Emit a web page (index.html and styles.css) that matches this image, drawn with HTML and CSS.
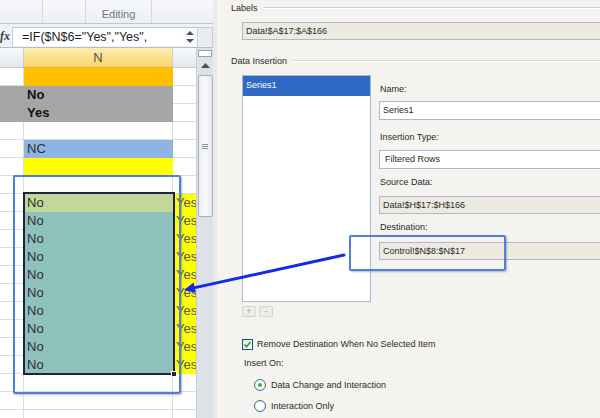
FILE: index.html
```html
<!DOCTYPE html>
<html lang="en">
<head>
    <meta charset="UTF-8">
    <meta name="viewport" content="width=device-width, initial-scale=1.0">
    <title>Data Insertion</title>
    <link rel="stylesheet" href="styles.css">
</head>
<body>

<div class="screen">
    <div class="excel">
        <div class="ribbon">
            <div class="group g1"></div>
            <div class="group g2"></div>
            <div class="group g3"><span>Editing</span></div>
            <div class="group g4"></div>
        </div>

        <div class="formula-bar">
            <div class="fx">fx</div>
            <div class="formula">=IF($N$6="Yes","Yes",</div>
            <div class="spin">
                <svg width="10" height="18" viewBox="0 0 10 18">
                    <polygon points="1,7 9,7 5,3" fill="#4a5260"/>
                    <polygon points="1,11 9,11 5,15" fill="#4a5260"/>
                </svg>
            </div>
            <div class="expand"></div>
        </div>

        <div class="sheet">
            <div class="grid">
                <div class="row head"><div class="c m"></div><div class="c n">N</div><div class="c o"></div></div>
                <div class="row"><div class="c m"></div><div class="c n orange"></div><div class="c o"></div></div>
                <div class="row"><div class="c m gray"></div><div class="c n gray bold">No</div><div class="c o"></div></div>
                <div class="row"><div class="c m gray"></div><div class="c n gray bold">Yes</div><div class="c o"></div></div>
                <div class="row"><div class="c m"></div><div class="c n"></div><div class="c o"></div></div>
                <div class="row"><div class="c m"></div><div class="c n blue">NC</div><div class="c o"></div></div>
                <div class="row"><div class="c m"></div><div class="c n yellow"></div><div class="c o"></div></div>
                <div class="row"><div class="c m"></div><div class="c n"></div><div class="c o"></div></div>
                <div class="row"><div class="c m"></div><div class="c n active">No</div><div class="c o yellow">Yes</div></div>
                <div class="row"><div class="c m"></div><div class="c n teal">No</div><div class="c o yellow">Yes</div></div>
                <div class="row"><div class="c m"></div><div class="c n teal">No</div><div class="c o yellow">Yes</div></div>
                <div class="row"><div class="c m"></div><div class="c n teal">No</div><div class="c o yellow">Yes</div></div>
                <div class="row"><div class="c m"></div><div class="c n teal">No</div><div class="c o yellow">Yes</div></div>
                <div class="row"><div class="c m"></div><div class="c n teal">No</div><div class="c o yellow">Yes</div></div>
                <div class="row"><div class="c m"></div><div class="c n teal">No</div><div class="c o yellow">Yes</div></div>
                <div class="row"><div class="c m"></div><div class="c n teal">No</div><div class="c o yellow">Yes</div></div>
                <div class="row"><div class="c m"></div><div class="c n teal">No</div><div class="c o yellow">Yes</div></div>
                <div class="row"><div class="c m"></div><div class="c n teal">No</div><div class="c o yellow">Yes</div></div>
                <div class="row"><div class="c m"></div><div class="c n"></div><div class="c o"></div></div>
                <div class="row"><div class="c m"></div><div class="c n"></div><div class="c o"></div></div>
                <div class="row"><div class="c m"></div><div class="c n"></div><div class="c o"></div></div>
            </div>

            <div class="vscroll">
                <div class="split"></div>
                <div class="up">
                    <svg width="9" height="5" viewBox="0 0 9 5"><polygon points="0,5 9,5 4.5,0" fill="#4a5260"/></svg>
                </div>
                <div class="thumb">
                    <div class="grip"></div>
                </div>
            </div>
        </div>
    </div>

    <div class="splitter"></div>

    <div class="dialog">
        <div class="legend">Labels</div>
        <div class="field ro wide">Data!$A$17:$A$166</div>

        <div class="legend second">Data Insertion</div>
        <div class="insertion">
            <div class="series">
                <div class="list">
                    <div class="item selected">Series1</div>
                </div>
                <div class="list-buttons">
                    <div class="mini">+</div>
                    <div class="mini">-</div>
                </div>
            </div>

            <div class="props">
                <div class="label">Name:</div>
                <div class="field tall name">Series1</div>
                <div class="label type">Insertion Type:</div>
                <div class="field tall combo">Filtered Rows</div>
                <div class="label src">Source Data:</div>
                <div class="field ro source">Data!$H$17:$H$166</div>
                <div class="label src">Destination:</div>
                <div class="field ro dest">Control!$N$8:$N$17</div>
            </div>
        </div>

        <div class="check-row">
            <span class="checkbox">
                <svg width="9" height="9" viewBox="0 0 9 9"><polyline points="1.5,4.5 3.5,6.8 7.5,2" fill="none" stroke="#24a82e" stroke-width="1.6"/></svg>
            </span>
            Remove Destination When No Selected Item
        </div>
        <div class="insert-on">Insert On:</div>
        <div class="radio-row first"><span class="radio on"></span>Data Change and Interaction</div>
        <div class="radio-row"><span class="radio"></span>Interaction Only</div>
    </div>

    <!-- selection marquee on the sheet -->
    <div class="selection"></div>
    <div class="fill-handle"></div>

    <!-- annotation callouts -->
    <div class="callout range"></div>
    <div class="callout destination"></div>
    <svg class="arrow" width="600" height="418" viewBox="0 0 600 418">
        <line x1="344" y1="255" x2="195" y2="287.6" stroke="#1428ee" stroke-width="3" stroke-linecap="round"/>
        <polygon points="184,290 195.8,292.8 193.6,282.4" fill="#1428ee"/>
    </svg>
</div>

</body>
</html>
```

FILE: styles.css
```css
* {
    box-sizing: border-box;
}
body {
    margin: 0;
    width: 600px;
    height: 418px;
    overflow: hidden;
    font-family: "Liberation Sans", Arial, sans-serif;
    background: #f4f3ef;
}
.screen {
    position: relative;
    display: flex;
    width: 600px;
    height: 418px;
    overflow: hidden;
}

/* spreadsheet side */
.excel {
    width: 213px;
    flex: none;
    display: flex;
    flex-direction: column;
    background: #fff;
}
.ribbon {
    height: 24px;
    display: flex;
    background: linear-gradient(#f7f8fa, #eceff3);
    border-bottom: 1px solid #bfc7d2;
}
.group {
    display: flex;
    align-items: flex-end;
    justify-content: center;
    border-right: 1px solid #d2d8e0;
}
.g1, .g2 {
    width: 43px;
}
.g3 {
    width: 66px;
}
.g4 {
    flex: 1;
    border-right: none;
}
.group span {
    font-size: 11px;
    color: #707886;
    padding-bottom: 3px;
}
.formula-bar {
    height: 24px;
    display: flex;
    padding: 3px 0 1px;
    background: #eef1f5;
    border-bottom: 1px solid #b3bcc8;
}
.fx {
    width: 13px;
    font: italic bold 12px "Liberation Serif", serif;
    color: #3d3d3d;
    line-height: 19px;
    text-align: right;
    padding-right: 2px;
    overflow: hidden;
    white-space: nowrap;
    border-right: 1px solid #c7ced8;
}
.formula {
    width: 170px;
    background: #fff;
    border-top: 1px solid #c0c8d3;
    padding-left: 9px;
    font-size: 12.5px;
    line-height: 18px;
    color: #1e1e1e;
    white-space: nowrap;
    overflow: hidden;
}
.spin {
    width: 14px;
    display: flex;
    align-items: center;
    justify-content: center;
    background: #fbfbfc;
    border-top: 1px solid #c0c8d3;
}
.expand {
    flex: 1;
    background: #e9ecf1;
    border: 1px solid #c7ced8;
    border-bottom: none;
}
.sheet {
    flex: 1;
    display: flex;
    overflow: hidden;
}
.grid {
    width: 196px;
    flex: none;
}
.row {
    display: flex;
    height: 18px;
}
.c {
    height: 100%;
    border-right: 1px solid #dadcdf;
    border-bottom: 1px solid #dadcdf;
    padding-left: 3px;
    font-size: 13px;
    line-height: 17px;
    color: #2e2e2e;
    white-space: nowrap;
    overflow: hidden;
}
.m {
    width: 24px;
}
.n {
    width: 149px;
}
.o {
    width: 23px;
    border-right: none;
    color: #575757;
}
.head {
    height: 20px;
}
.head .c {
    padding: 0;
    text-align: center;
    line-height: 19px;
    color: #4f4f4f;
    background: linear-gradient(#f8f9fb, #e3e7ed);
    border-color: #c6cdd7;
}
.head .n {
    background: linear-gradient(#fdedb2, #f9d46c);
    border-bottom-color: #e5b136;
}
.orange {
    background: #ffc000;
    border-color: #ffc000;
}
.gray {
    background: #a6a6a6;
    border-color: #a6a6a6;
}
.bold {
    font-weight: bold;
    color: #111;
}
.blue {
    background: #8db4e2;
    border-color: #8db4e2;
}
.yellow {
    background: #ffff00;
    border-color: #ffff00;
}
.active {
    background: #c4d79b;
    border-color: #c4d79b;
}
.teal {
    background: #8fc1bd;
    border-color: #8fc1bd;
}
.vscroll {
    width: 17px;
    flex: none;
    display: flex;
    flex-direction: column;
    align-items: center;
    background: #dde1e8;
    border-left: 1px solid #c9ced6;
}
.split {
    width: 14px;
    height: 7px;
    margin-top: 2px;
    background: #fff;
    border: 1px solid #98a2af;
}
.up {
    width: 15px;
    height: 17px;
    display: flex;
    align-items: center;
    justify-content: center;
}
.thumb {
    width: 15px;
    height: 142px;
    margin-top: 1px;
    display: flex;
    align-items: center;
    justify-content: center;
    background: linear-gradient(90deg, #eceff3, #f7f8fa, #e4e7ec);
    border: 1px solid #a9b1bd;
    border-radius: 2px;
}
.grip {
    width: 6px;
    height: 5px;
    border-top: 1px solid #8a93a0;
    border-bottom: 1px solid #8a93a0;
    background: linear-gradient(transparent 1px, #8a93a0 1px, #8a93a0 2px, transparent 2px);
}
.splitter {
    width: 4px;
    flex: none;
    background: #e8eaee;
}

/* dialog side */
.dialog {
    flex: 1;
    min-width: 0;
    padding: 2px 0 0 14px;
    font-size: 9px;
    color: #2a2a2a;
    overflow: hidden;
    white-space: nowrap;
}
.legend {
    display: flex;
    align-items: center;
    height: 12px;
}
.legend::after {
    content: "";
    flex: 1;
    margin-left: 5px;
    border-top: 1px solid #c6d1de;
    border-bottom: 1px solid #fff;
}
.legend.second {
    margin-top: 15px;
}
.legend.second::after {
    margin-left: 6px;
    border-top-color: #d6d9dd;
}
.field {
    height: 18px;
    width: 260px;
    padding-left: 3px;
    line-height: 16px;
    background: #fff;
    border: 1px solid #a7bad1;
}
.field.ro {
    background: #eeeae0;
}
.field.tall {
    height: 19px;
    line-height: 17px;
}
.wide {
    width: 400px;
    margin: 8px 0 0 11px;
}
.insertion {
    display: flex;
    gap: 8px;
    margin: 8px 0 0 11px;
}
.list {
    width: 129px;
    height: 227px;
    background: #fff;
    border: 1px solid #a7bad1;
}
.item {
    height: 20px;
    line-height: 19px;
    padding-left: 3px;
}
.item.selected {
    background: #316ac5;
    color: #fff;
}
.list-buttons {
    display: flex;
    gap: 3px;
    margin-top: 4px;
}
.mini {
    width: 14px;
    height: 11px;
    line-height: 9px;
    text-align: center;
    font-size: 9px;
    color: #a8a8a2;
    background: #eeede7;
    border: 1px solid #d6d5cd;
    border-radius: 1px;
}
.label {
    height: 12px;
    line-height: 12px;
    margin: 8px 0 0 1px;
}
.name {
    margin-top: 6px;
}
.label.type {
    margin-top: 11px;
}
.combo {
    margin-top: 7px;
    padding-left: 5px;
}
.label.src {
    margin-top: 7px;
}
.source {
    margin-top: 8px;
}
.dest {
    margin-top: 9px;
}
.check-row {
    display: flex;
    align-items: center;
    gap: 4px;
    height: 12px;
    margin: 21px 0 0 11px;
}
.checkbox {
    width: 11px;
    height: 11px;
    display: flex;
    align-items: center;
    justify-content: center;
    background: linear-gradient(135deg, #e6e6e0, #fff);
    border: 1px solid #1c5180;
}
.insert-on {
    height: 12px;
    line-height: 12px;
    margin: 7px 0 0 13px;
}
.radio-row {
    display: flex;
    align-items: center;
    gap: 5px;
    height: 12px;
    margin: 9px 0 0 23px;
}
.radio-row.first {
    margin-top: 10px;
}
.radio {
    width: 12px;
    height: 12px;
    border-radius: 50%;
    border: 1px solid #3d6d9e;
    background: radial-gradient(circle, #fff 40%, #e4e4de);
    display: flex;
    align-items: center;
    justify-content: center;
}
.radio.on::after {
    content: "";
    width: 4px;
    height: 4px;
    border-radius: 50%;
    background: #2dbb35;
}

/* overlays */
.selection {
    position: absolute;
    left: 23px;
    top: 192px;
    width: 152px;
    height: 183px;
    border: 2px solid #22203e;
}
.fill-handle {
    position: absolute;
    left: 171px;
    top: 371px;
    width: 6px;
    height: 6px;
    background: #22203e;
    border: 1px solid #fff;
}
.callout {
    position: absolute;
    border: 2.5px solid #4f7fd6;
    border-radius: 2px;
    box-shadow: 1px 1px 2px rgba(40, 60, 110, 0.35);
}
.callout.range {
    left: 13px;
    top: 175px;
    width: 168px;
    height: 219px;
}
.callout.destination {
    left: 349px;
    top: 235px;
    width: 157px;
    height: 36px;
}
.arrow {
    position: absolute;
    left: 0;
    top: 0;
    pointer-events: none;
}
```
